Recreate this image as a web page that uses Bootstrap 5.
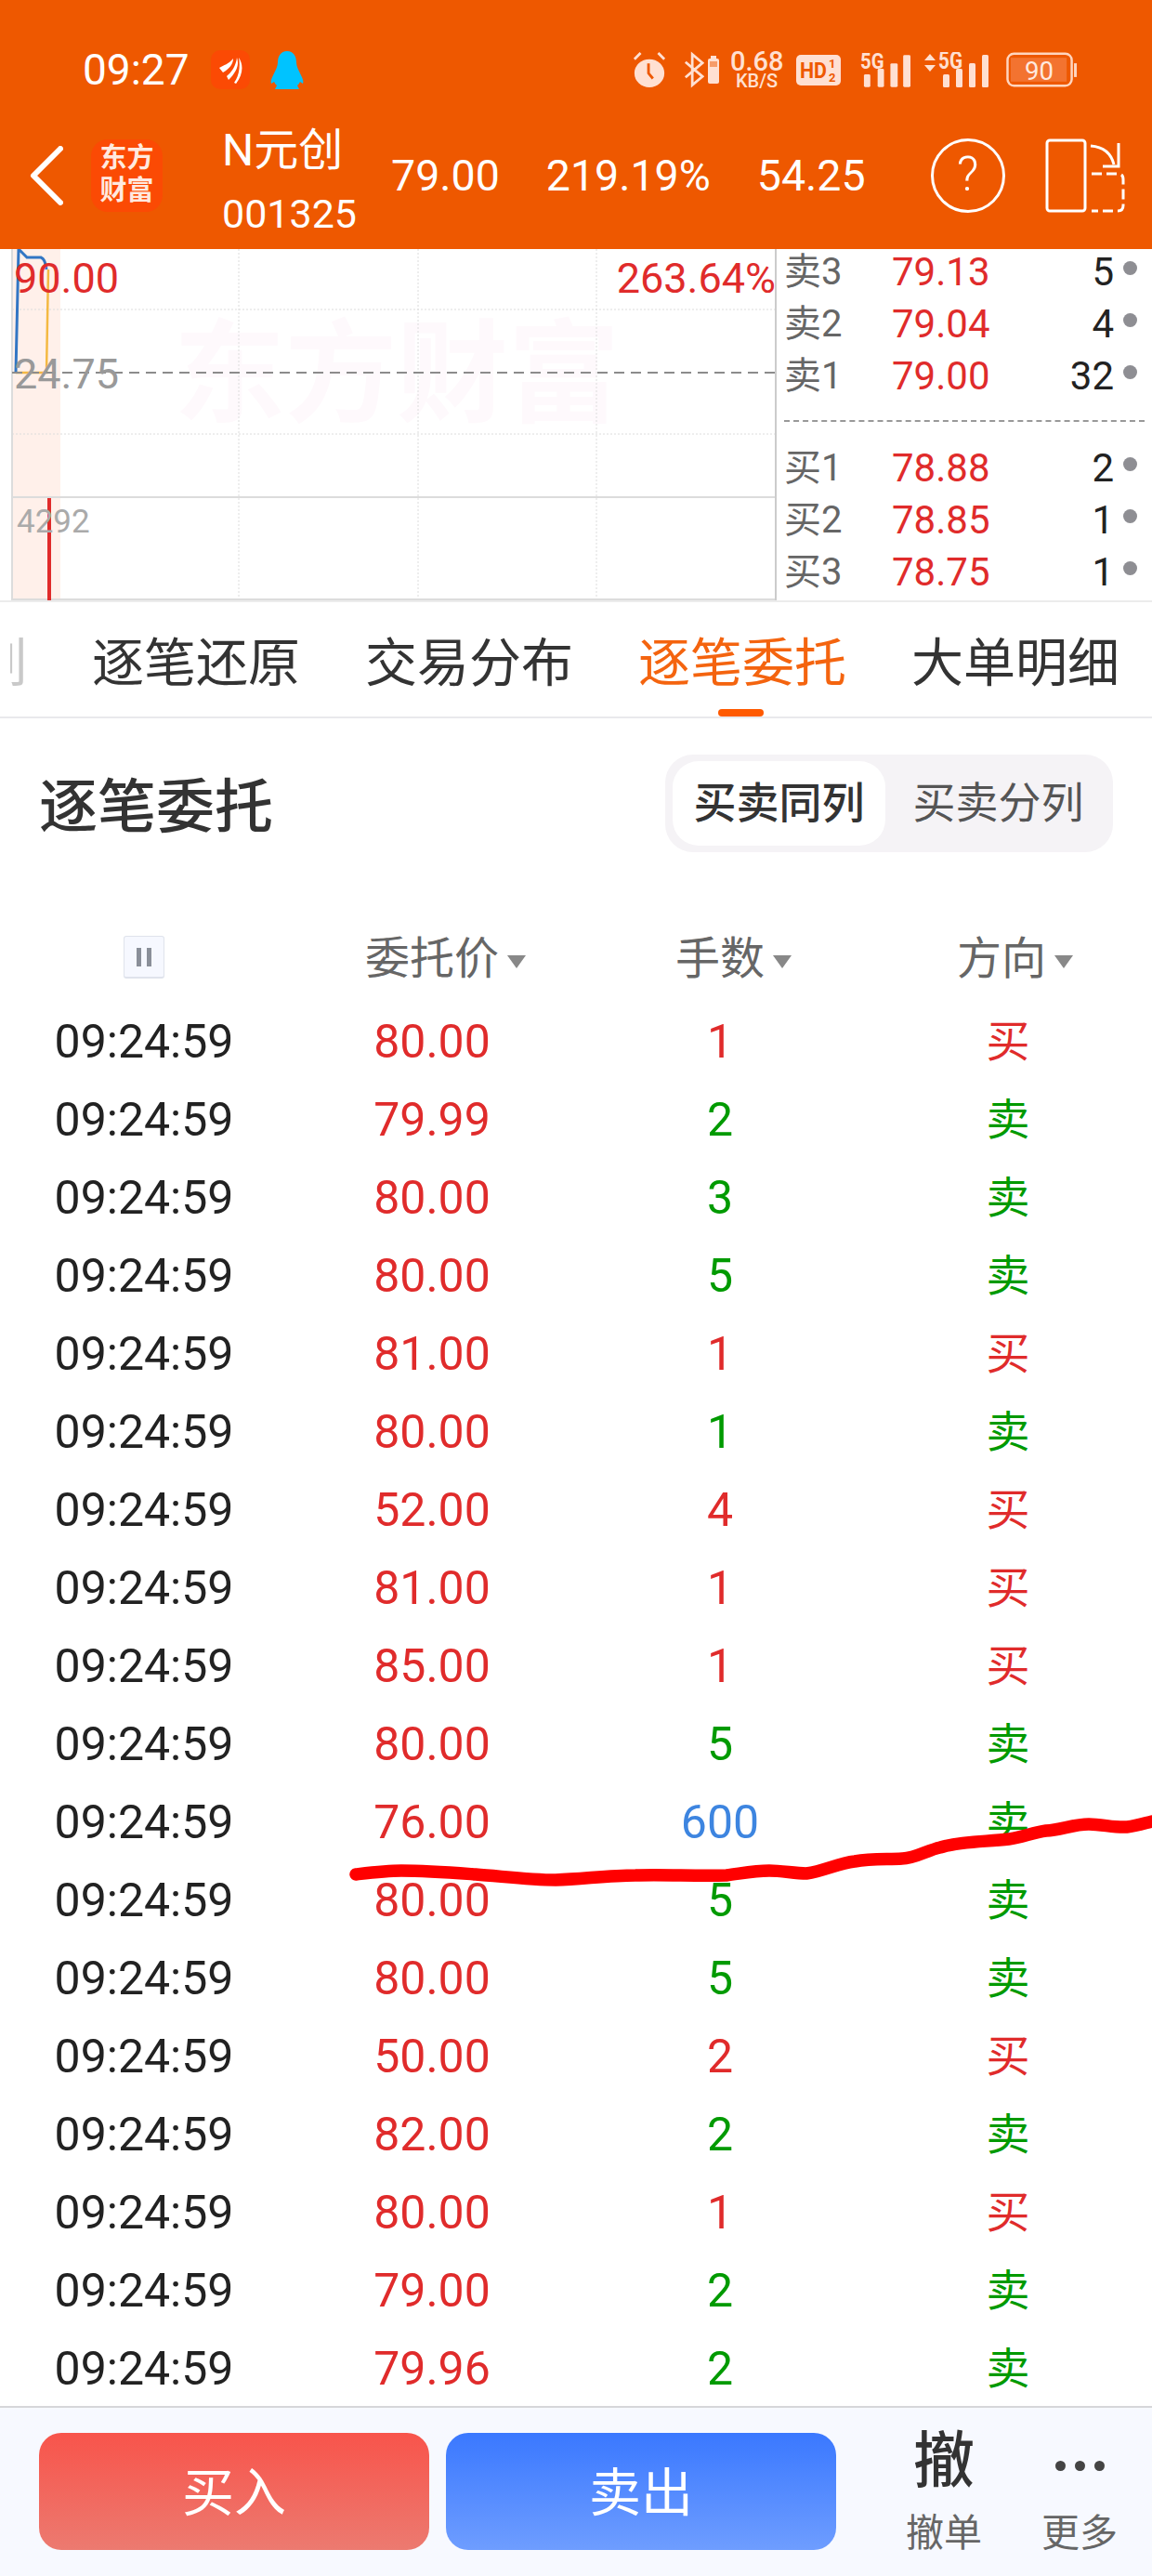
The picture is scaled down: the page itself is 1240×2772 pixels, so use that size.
<!DOCTYPE html>
<html lang="zh-CN">
<head>
<meta charset="UTF-8">
<title>N元创 逐笔委托</title>
<link href="https://cdn.jsdelivr.net/npm/bootstrap@5.3.0/dist/css/bootstrap.min.css" rel="stylesheet">
<style>
  html, body { margin: 0; background: #fff; }
  body { font-family: Roboto, "Noto Sans CJK SC", sans-serif; color: #222; }
  .page-wrap { width: 1240px; height: 2772px; overflow: hidden; }

  .top-area { background: #ee5800; height: 268px; color: #fff; }
  .status-bar { height: 135px; padding: 15px 80px 0 89px; color: #ffe0d2; }
  .clock { font-size: 46px; color: #fff; width: 138px; line-height: 1; }
  .si-qq { margin-left: 22px; }
  .si-bt { margin-left: 19px; }
  .si-bat { margin-left: 4px; }
  .si-5g { margin-left: 21px; }
  .si-5g2 { margin-left: 14px; }
  .si-power { margin-left: 18px; }
  .net-speed { width: 57px; margin: 0 14px 0 12px; text-align: center; font-weight: 500; line-height: 1; white-space: nowrap; }
  .net-speed b { display: block; font-size: 29px; font-weight: 500; line-height: 24px; }
  .net-speed i { display: block; font-size: 20px; font-style: normal; line-height: 18px; }
  .nav-row { height: 133px; padding: 0 0 25px 32px; }
  .app-logo { width: 77px; height: 78px; margin-left: 30px; background: #fb4a04; border-radius: 18px; font-size: 29px; font-weight: 700; line-height: 35px; text-align: center; padding-top: 3px; color: #ffe9df; }
  .stock-name { width: 182px; margin-left: 64px; margin-top: 11px; }
  .stock-name div:first-child { font-size: 48px; line-height: 58px; margin-bottom: 13px; }
  .stock-name div:last-child { font-size: 43px; line-height: 52px; }
  .quote-num { font-size: 46.5px; line-height: 1; }
  .quote-gap { margin-left: 50px; }
  .help-circle { width: 80px; height: 80px; margin-left: 70px; border: 3px solid #fff; border-radius: 50%; font-size: 52px; line-height: 72px; text-align: center; font-weight: 300; }
  .fold-icon { margin-left: 43px; }

  .chart-row { height: 380px; border-bottom: 2px solid #ececec; }
  .chart-pane { width: 836px; flex: none; border-right: 2px solid #ccc; }
  .chart-pane svg { display: block; }
  .chart-txt { font-family: Roboto, sans-serif; }
  .mark-txt { font-family: "Noto Sans CJK SC", sans-serif; font-weight: 700; }
  .book-pane { padding-left: 8px; margin-top: -3px; }
  .book-line { height: 56px; font-size: 42px; line-height: 56px; }
  .book-label { width: 116px; color: #666; font-size: 40px; }
  .book-price { width: 140px; color: #e02b2b; }
  .book-qty { width: 99px; text-align: right; color: #222; }
  .book-dot { width: 15px; height: 15px; background: #8e8e93; border-radius: 50%; margin: 0 0 10px 10px; }
  .book-gap { border-top: 2px dashed #999; margin: 19px 8px 22px 0; height: 0; }

  .tab-strip { height: 125px; border-bottom: 2px solid #e9e9ec; overflow: hidden; gap: 70px; font-size: 56px; line-height: 1; padding-top: 38px; color: #333; }
  .tab-strip::before { content: ""; position: absolute; left: 0; top: 0; width: 11px; height: 120px; background: #fff; z-index: 1; }
  .tab-cut { margin-left: -27px; color: #c9c9c9; }
  .tab-item { white-space: nowrap; width: 224px; flex: none; text-align: center; }
  .tab-item.tab-on { color: #f4640f; }
  .tab-bar { position: absolute; left: 773px; top: 115px; width: 49px; height: 8px; background: #ff5a00; border-radius: 4px; }

  .title-row { height: 212px; padding: 39px 42px 0 42px; align-items: flex-start; }
  .title-txt { font-size: 63px; font-weight: 500; line-height: 1; margin-top: 25px; color: #333; }
  .seg-box { width: 482px; height: 105px; background: #f5f3f6; border-radius: 30px; padding: 7px 8px; }
  .seg-item { width: 229px; height: 91px; font-size: 46px; line-height: 91px; text-align: center; color: #555; border-radius: 28px; }
  .seg-item + .seg-item { margin-left: 7px; }
  .seg-item.seg-on { background: #fff; color: #333; font-weight: 500; }

  .head-row { height: 94px; font-size: 48px; color: #666; line-height: 94px; }
  .head-last { padding-right: 14px; }
  .pause-btn { width: 44px; height: 46px; border: 1px solid #dfe3ec; border-bottom-width: 2px; background: #f6f8ff; border-radius: 3px; gap: 6px; margin-top: 22px; }
  .pause-btn span { width: 5px; height: 20px; background: #8a8f99; }
  .sort-caret { display: inline-block; width: 0; height: 0; border-left: 10px solid transparent; border-right: 10px solid transparent; border-top: 14px solid #888; margin-left: 9px; margin-right: -29px; vertical-align: middle; }

  .deal-list { height: 1510px; overflow: hidden; }
  .deal-row { height: 84px; line-height: 84px; font-size: 50px; }
  .clr-up { color: #e02b2b; }
  .clr-down { color: #009a00; }
  .clr-big { color: #3d85e0; }
  .clr-time { color: #222; }
  .deal-side { font-size: 47px; }

  .foot-bar { height: 183px; background: #f7f9ff; border-top: 2px solid #d6d6d9; padding: 27px 0 0 42px; gap: 18px; }
  .trade-btn { width: 420px; height: 126px; border: 0; border-radius: 24px; color: #fff; font-size: 56px; line-height: 1; padding-top: 4px; }
  .trade-buy { background: linear-gradient(180deg, #f8544b, #ec7a70); }
  .trade-sell { background: linear-gradient(180deg, #3a78ff, #6e9dff); }
  .foot-tool { width: 82px; text-align: center; color: #666; font-size: 41px; line-height: 1; white-space: nowrap; }
  .tool-undo { margin-left: 57px; }
  .tool-more { margin-left: 46px; }
  .foot-big { height: 66px; font-size: 66px; line-height: 62px; font-weight: 500; color: #333; margin-bottom: 22px; }
  .foot-dots { height: 66px; gap: 10px; margin-bottom: 22px; padding-top: 4px; }
  .foot-dots span { width: 11px; height: 11px; background: #444; border-radius: 50%; }

  .pen-line { position: absolute; left: 0; top: 0; pointer-events: none; }
</style>
</head>
<body>
<div class="page-wrap position-relative d-flex flex-column">

  <div class="top-area">
    <div class="status-bar d-flex align-items-center">
      <div class="clock">09:27</div>
      <svg width="42" height="42" viewBox="0 0 42 42">
        <rect width="42" height="42" rx="10" fill="#fb4a04"/>
        <path d="M9 19C14 16 19 15 24 9 24 15 20 20 13 24Z M17 28C22 24 27 17 28 8 31 16 27 24 19 32Z M25 35C30 28 32 18 30 8 35 15 35 26 27 36Z" fill="#fff"/>
      </svg>
      <svg width="36" height="41" viewBox="0 0 36 41" class="si-qq">
        <path d="M18 0C11 0 8 6 8 12 8 16 6 20 3 26 1 30 0 33 1 35L4 33C5 35 6 36 7 37L5 41H31L29 37C30 36 31 35 32 33L35 35C36 33 35 30 33 26 30 20 28 16 28 12 28 6 25 0 18 0Z" fill="#00c3ff"/>
      </svg>
      <div class="d-flex align-items-center ms-auto">
        <svg width="36" height="42" viewBox="0 0 38 42">
          <ellipse cx="19" cy="25" rx="17" ry="16" fill="#ffe0d2"/>
          <path d="M2 9 9 2M36 9 29 2" stroke="#ffe0d2" stroke-width="3"/>
          <path d="M18 14V25L23 31" stroke="#ee5800" stroke-width="3" fill="none"/>
        </svg>
        <svg width="22" height="40" viewBox="0 0 24 40" class="si-bt">
          <path d="M2 11 22 28 10 38V2L22 12 2 29" stroke="#ffe0d2" stroke-width="3" fill="none"/>
        </svg>
        <svg width="12" height="30" viewBox="0 0 12 30" class="si-bat">
          <rect x="3" y="0" width="6" height="3" fill="#ffe0d2"/>
          <rect y="3" width="12" height="27" rx="2" fill="#ffe0d2"/>
          <rect x="2" y="6" width="8" height="6" fill="#ee5800" opacity=".5"/>
        </svg>
        <div class="net-speed"><b>0.68</b><i>KB/S</i></div>
        <svg width="48" height="33" viewBox="0 0 48 33">
          <rect width="48" height="33" rx="5" fill="#ffe0d2"/>
          <text x="4" y="25" font-size="23" font-weight="700" fill="#ee5800" font-family="Roboto" textLength="29" lengthAdjust="spacingAndGlyphs">HD</text>
          <text x="35" y="14" font-size="13" font-weight="700" fill="#ee5800" font-family="Roboto">1</text>
          <text x="35" y="29" font-size="13" font-weight="700" fill="#ee5800" font-family="Roboto">2</text>
        </svg>
        <svg width="55" height="38" viewBox="0 0 56 38" class="si-5g">
          <text x="0" y="18" font-size="25" font-weight="700" fill="#ffe0d2" font-family="Roboto" textLength="26" lengthAdjust="spacingAndGlyphs">5G</text>
          <rect x="4" y="24" width="7" height="14" rx="1.5" fill="#ffe0d2"/>
          <rect x="19" y="18" width="7" height="20" rx="1.5" fill="#ffe0d2"/>
          <rect x="33" y="12" width="8" height="26" rx="1.5" fill="#ffe0d2"/>
          <rect x="47" y="3" width="8" height="35" rx="1.5" fill="#ffe0d2"/>
        </svg>
        <svg width="70" height="38" viewBox="0 0 70 38" class="si-5g2">
          <path d="M6 2 12 9H0ZM0 14H12L6 21Z" fill="#ffe0d2"/>
          <text x="15" y="18" font-size="25" font-weight="700" fill="#ffe0d2" font-family="Roboto" textLength="26" lengthAdjust="spacingAndGlyphs">5G</text>
          <rect x="20" y="24" width="7" height="14" rx="1.5" fill="#ffe0d2"/>
          <rect x="34" y="18" width="7" height="20" rx="1.5" fill="#ffe0d2"/>
          <rect x="48" y="12" width="7" height="26" rx="1.5" fill="#ffe0d2"/>
          <rect x="62" y="3" width="7" height="35" rx="1.5" fill="#ffe0d2"/>
        </svg>
        <svg width="77" height="38" viewBox="0 0 78 38" class="si-power">
          <rect x="1.5" y="1.5" width="70" height="35" rx="7" fill="none" stroke="#ffd5bf" stroke-width="2.5"/>
          <rect x="5" y="6" width="61" height="26" fill="#f47a3c" opacity=".8"/>
          <rect x="74" y="12" width="3" height="15" fill="#ffd5bf"/>
          <text x="36" y="30" text-anchor="middle" font-size="28" fill="#ffe9df" font-family="Roboto">90</text>
        </svg>
      </div>
    </div>

    <div class="nav-row d-flex align-items-center">
      <svg width="36" height="64" viewBox="0 0 36 64" class="flex-shrink-0">
        <path d="M33 3 4 32 33 61" stroke="#fff" stroke-width="6" stroke-linecap="round" stroke-linejoin="round" fill="none"/>
      </svg>
      <div class="app-logo flex-shrink-0">东方<br>财富</div>
      <div class="stock-name flex-shrink-0"><div>N元创</div><div>001325</div></div>
      <div class="quote-num">79.00</div>
      <div class="quote-num quote-gap">219.19%</div>
      <div class="quote-num quote-gap">54.25</div>
      <div class="help-circle flex-shrink-0">?</div>
      <svg width="86" height="80" viewBox="0 0 86 80" class="fold-icon flex-shrink-0">
        <rect x="2" y="2" width="41" height="76" rx="3" fill="none" stroke="#fff" stroke-width="3"/>
        <path d="M49 8C62 9 71 16 74 28M62 30H79V5" stroke="#fff" stroke-width="3" fill="none"/>
        <path d="M50 38H78Q84 38 84 44V72Q84 78 78 78H50" stroke="#fff" stroke-width="3" fill="none" stroke-dasharray="11 5"/>
      </svg>
    </div>
  </div>

  <div class="chart-row d-flex">
    <div class="chart-pane">
      <svg width="834" height="378" viewBox="0 268 834 378">
        <rect x="13" y="268" width="52" height="378" fill="#fff0ea"/>
        <text x="427" y="445" text-anchor="middle" font-size="120" class="mark-txt" fill="#fef9fc">东方财富</text>
        <g stroke="#dcdcdc" stroke-width="1" stroke-dasharray="2 2">
          <path d="M13 333H835M13 467H835M257 268V646M450 268V646M642 268V646"/>
        </g>
        <path d="M13 268V646M13 645H835M13 535H835" stroke="#dcdcdc" stroke-width="2"/>
        <path d="M17 401H50L52 290" stroke="#f4b942" stroke-width="2.5" fill="none"/>
        <path d="M17 401 20 268 24 272 29 277H44Q49 279 50 290" stroke="#3276c4" stroke-width="3" fill="none"/>
        <path d="M13 401H835" stroke="#8c8c8c" stroke-width="2" stroke-dasharray="11 7"/>
        <rect x="51" y="536" width="4" height="110" fill="#e02b2b"/>
        <text x="15" y="315" font-size="45" class="chart-txt" fill="#e02b2b">90.00</text>
        <text x="835" y="315" text-anchor="end" font-size="45" class="chart-txt" fill="#e02b2b">263.64%</text>
        <text x="15" y="418" font-size="45" class="chart-txt" fill="#999">24.75</text>
        <text x="18" y="573" font-size="35" class="chart-txt" fill="#aaa">4292</text>
      </svg>
    </div>
    <div class="book-pane flex-grow-1">
      <div class="book-line d-flex align-items-center"><div class="book-label">卖3</div><div class="book-price">79.13</div><div class="book-qty">5</div><div class="book-dot"></div></div>
      <div class="book-line d-flex align-items-center"><div class="book-label">卖2</div><div class="book-price">79.04</div><div class="book-qty">4</div><div class="book-dot"></div></div>
      <div class="book-line d-flex align-items-center"><div class="book-label">卖1</div><div class="book-price">79.00</div><div class="book-qty">32</div><div class="book-dot"></div></div>
      <div class="book-gap"></div>
      <div class="book-line d-flex align-items-center"><div class="book-label">买1</div><div class="book-price">78.88</div><div class="book-qty">2</div><div class="book-dot"></div></div>
      <div class="book-line d-flex align-items-center"><div class="book-label">买2</div><div class="book-price">78.85</div><div class="book-qty">1</div><div class="book-dot"></div></div>
      <div class="book-line d-flex align-items-center"><div class="book-label">买3</div><div class="book-price">78.75</div><div class="book-qty">1</div><div class="book-dot"></div></div>
    </div>
  </div>

  <div class="tab-strip d-flex position-relative">
    <div class="tab-cut">列</div>
    <div class="tab-item">逐笔还原</div>
    <div class="tab-item">交易分布</div>
    <div class="tab-item tab-on">逐笔委托</div>
    <div class="tab-item">大单明细</div>
    <div class="tab-bar"></div>
  </div>

  <div class="title-row d-flex justify-content-between">
    <div class="title-txt">逐笔委托</div>
    <div class="seg-box d-flex">
      <div class="seg-item seg-on">买卖同列</div>
      <div class="seg-item">买卖分列</div>
    </div>
  </div>

  <div class="head-row row g-0 text-center">
    <div class="col-3 d-flex justify-content-center"><div class="pause-btn d-flex justify-content-center align-items-center"><span></span><span></span></div></div>
    <div class="col-3">委托价<i class="sort-caret"></i></div>
    <div class="col-3">手数<i class="sort-caret"></i></div>
    <div class="col-3 head-last">方向<i class="sort-caret"></i></div>
  </div>

  <div class="deal-list">
    <div class="deal-row row g-0 text-center"><div class="col-3 clr-time">09:24:59</div><div class="col-3 clr-up">80.00</div><div class="col-3 clr-up">1</div><div class="col-3 clr-up deal-side">买</div></div>
    <div class="deal-row row g-0 text-center"><div class="col-3 clr-time">09:24:59</div><div class="col-3 clr-up">79.99</div><div class="col-3 clr-down">2</div><div class="col-3 clr-down deal-side">卖</div></div>
    <div class="deal-row row g-0 text-center"><div class="col-3 clr-time">09:24:59</div><div class="col-3 clr-up">80.00</div><div class="col-3 clr-down">3</div><div class="col-3 clr-down deal-side">卖</div></div>
    <div class="deal-row row g-0 text-center"><div class="col-3 clr-time">09:24:59</div><div class="col-3 clr-up">80.00</div><div class="col-3 clr-down">5</div><div class="col-3 clr-down deal-side">卖</div></div>
    <div class="deal-row row g-0 text-center"><div class="col-3 clr-time">09:24:59</div><div class="col-3 clr-up">81.00</div><div class="col-3 clr-up">1</div><div class="col-3 clr-up deal-side">买</div></div>
    <div class="deal-row row g-0 text-center"><div class="col-3 clr-time">09:24:59</div><div class="col-3 clr-up">80.00</div><div class="col-3 clr-down">1</div><div class="col-3 clr-down deal-side">卖</div></div>
    <div class="deal-row row g-0 text-center"><div class="col-3 clr-time">09:24:59</div><div class="col-3 clr-up">52.00</div><div class="col-3 clr-up">4</div><div class="col-3 clr-up deal-side">买</div></div>
    <div class="deal-row row g-0 text-center"><div class="col-3 clr-time">09:24:59</div><div class="col-3 clr-up">81.00</div><div class="col-3 clr-up">1</div><div class="col-3 clr-up deal-side">买</div></div>
    <div class="deal-row row g-0 text-center"><div class="col-3 clr-time">09:24:59</div><div class="col-3 clr-up">85.00</div><div class="col-3 clr-up">1</div><div class="col-3 clr-up deal-side">买</div></div>
    <div class="deal-row row g-0 text-center"><div class="col-3 clr-time">09:24:59</div><div class="col-3 clr-up">80.00</div><div class="col-3 clr-down">5</div><div class="col-3 clr-down deal-side">卖</div></div>
    <div class="deal-row row g-0 text-center"><div class="col-3 clr-time">09:24:59</div><div class="col-3 clr-up">76.00</div><div class="col-3 clr-big">600</div><div class="col-3 clr-down deal-side">卖</div></div>
    <div class="deal-row row g-0 text-center"><div class="col-3 clr-time">09:24:59</div><div class="col-3 clr-up">80.00</div><div class="col-3 clr-down">5</div><div class="col-3 clr-down deal-side">卖</div></div>
    <div class="deal-row row g-0 text-center"><div class="col-3 clr-time">09:24:59</div><div class="col-3 clr-up">80.00</div><div class="col-3 clr-down">5</div><div class="col-3 clr-down deal-side">卖</div></div>
    <div class="deal-row row g-0 text-center"><div class="col-3 clr-time">09:24:59</div><div class="col-3 clr-up">50.00</div><div class="col-3 clr-up">2</div><div class="col-3 clr-up deal-side">买</div></div>
    <div class="deal-row row g-0 text-center"><div class="col-3 clr-time">09:24:59</div><div class="col-3 clr-up">82.00</div><div class="col-3 clr-down">2</div><div class="col-3 clr-down deal-side">卖</div></div>
    <div class="deal-row row g-0 text-center"><div class="col-3 clr-time">09:24:59</div><div class="col-3 clr-up">80.00</div><div class="col-3 clr-up">1</div><div class="col-3 clr-up deal-side">买</div></div>
    <div class="deal-row row g-0 text-center"><div class="col-3 clr-time">09:24:59</div><div class="col-3 clr-up">79.00</div><div class="col-3 clr-down">2</div><div class="col-3 clr-down deal-side">卖</div></div>
    <div class="deal-row row g-0 text-center"><div class="col-3 clr-time">09:24:59</div><div class="col-3 clr-up">79.96</div><div class="col-3 clr-down">2</div><div class="col-3 clr-down deal-side">卖</div></div>
  </div>

  <div class="foot-bar d-flex align-items-start">
    <button class="trade-btn trade-buy" type="button">买入</button>
    <button class="trade-btn trade-sell" type="button">卖出</button>
    <div class="foot-tool tool-undo"><div class="foot-big">撤</div>撤单</div>
    <div class="foot-tool tool-more"><div class="foot-dots d-flex justify-content-center align-items-center"><span></span><span></span><span></span></div>更多</div>
  </div>

  <!-- hand drawn mark on top of the list -->
  <svg class="pen-line" width="1240" height="2772" viewBox="0 0 1240 2772">
    <path d="M383 2017C400 2015 416 2013 432 2013 460 2013 485 2015 512 2017 540 2019 570 2023 598 2023 628 2022 655 2018 684 2018 715 2017 750 2019 782 2018 798 2016 812 2013 828 2013 842 2013 855 2016 868 2016 888 2013 902 2005 920 2003 938 2000 955 2001 971 2000 985 2000 998 1991 1012 1988 1036 1981 1062 1982 1086 1979 1100 1977 1112 1972 1126 1970 1142 1969 1156 1963 1172 1963 1186 1963 1200 1967 1213 1966 1223 1965 1232 1962 1240 1960" stroke="#f00" stroke-width="13.5" stroke-linecap="round" fill="none"/>
  </svg>
</div>
<script src="https://cdn.jsdelivr.net/npm/bootstrap@5.3.0/dist/js/bootstrap.bundle.min.js"></script>
</body>
</html>
